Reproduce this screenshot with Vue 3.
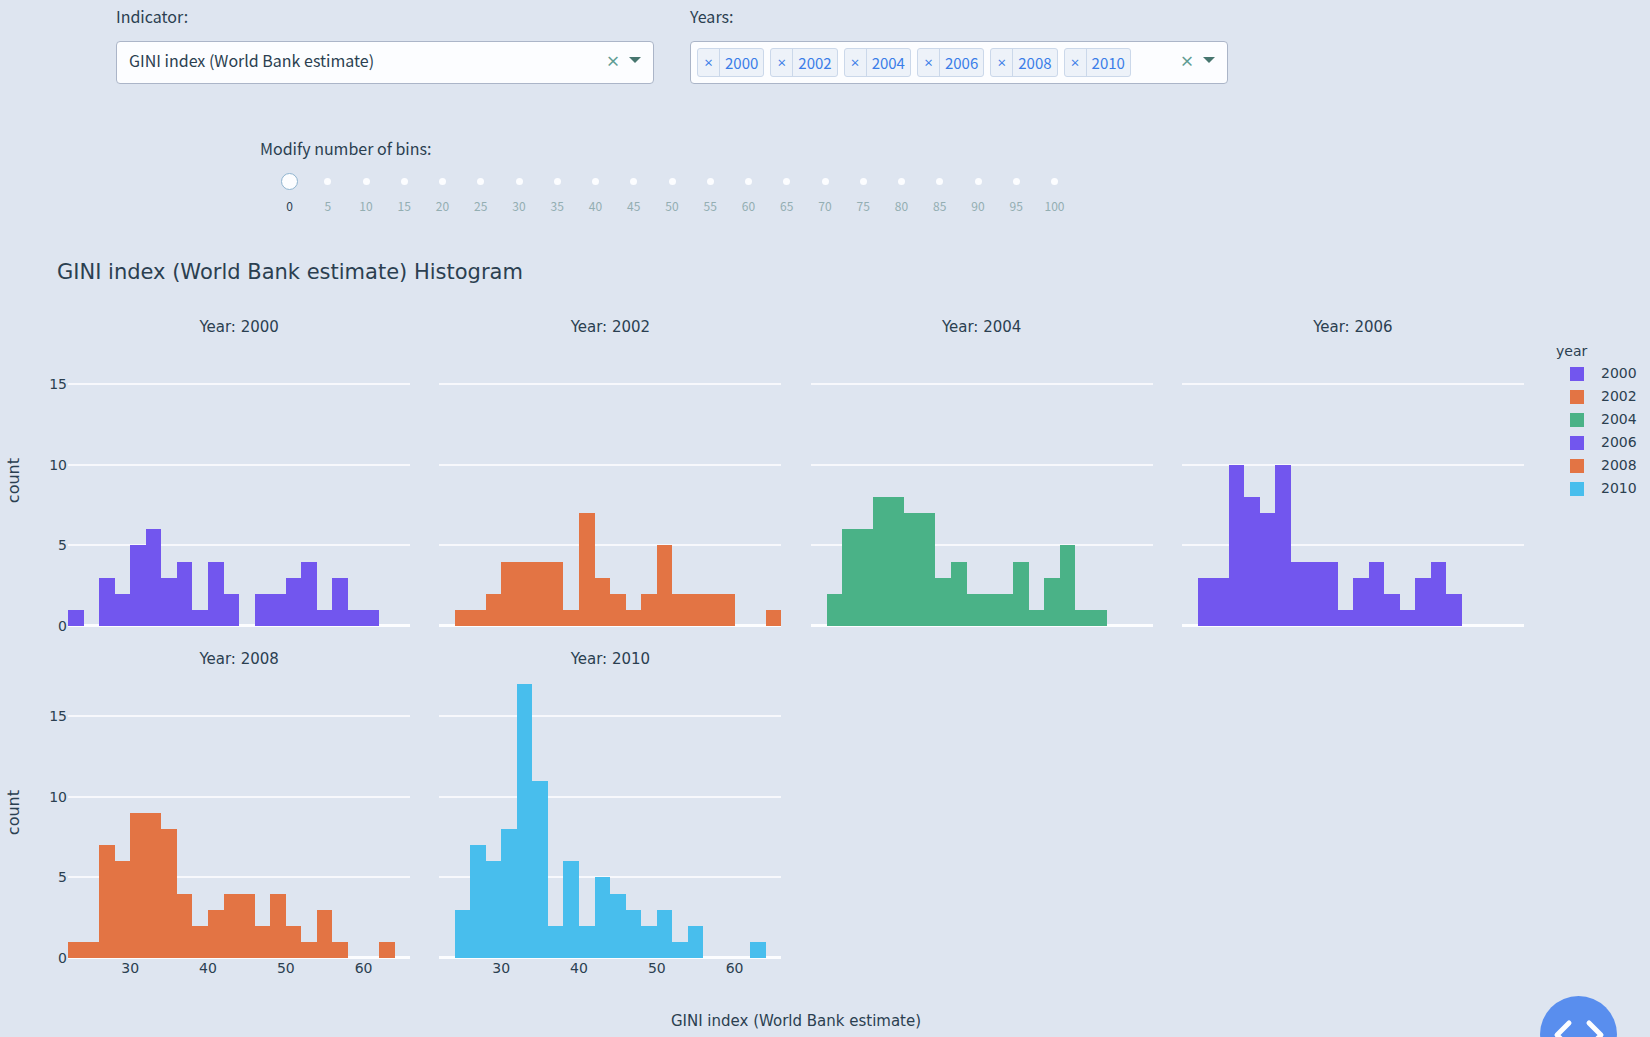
<script setup>
import { computed, ref } from 'vue'

const indicator = ref('GINI index (World Bank estimate)')
const years = ref([2000, 2002, 2004, 2006, 2008, 2010])
const bins = ref(0)
const marks = Array.from({ length: 21 }, (_, i) => i * 5)

const PLOT_HEIGHT = 290
const MAX_COUNT = 18
const X_MIN = 22
const X_MAX = 66
const BIN = 2

const yTicks = [0, 5, 10, 15]
const xTicks = [30, 40, 50, 60]

const series = [
  { year: 2000, color: '#7256ee', counts: [1, 0, 3, 2, 5, 6, 3, 4, 1, 4, 2, 0, 2, 2, 3, 4, 1, 3, 1, 1, 0, 0] },
  { year: 2002, color: '#e37444', counts: [0, 1, 1, 2, 4, 4, 4, 4, 1, 7, 3, 2, 1, 2, 5, 2, 2, 2, 2, 0, 0, 1] },
  { year: 2004, color: '#4ab287', counts: [0, 2, 6, 6, 8, 8, 7, 7, 3, 4, 2, 2, 2, 4, 1, 3, 5, 1, 1, 0, 0, 0] },
  { year: 2006, color: '#7256ee', counts: [0, 3, 3, 10, 8, 7, 10, 4, 4, 4, 1, 3, 4, 2, 1, 3, 4, 2, 0, 0, 0, 0] },
  { year: 2008, color: '#e37444', counts: [1, 1, 7, 6, 9, 9, 8, 4, 2, 3, 4, 4, 2, 4, 2, 1, 3, 1, 0, 0, 1, 0] },
  { year: 2010, color: '#48beed', counts: [0, 3, 7, 6, 8, 17, 11, 2, 6, 2, 5, 4, 3, 2, 3, 1, 2, 0, 0, 0, 1, 0] }
]

const visible = computed(() => series.filter((s) => years.value.includes(s.year)))
const rows = computed(() => {
  const out = []
  for (let i = 0; i < visible.value.length; i += 4) out.push(visible.value.slice(i, i + 4))
  return out
})

const yPos = (count) => Math.round(PLOT_HEIGHT * (1 - count / MAX_COUNT))
const xPos = (value) => `${((value - X_MIN) / (X_MAX - X_MIN)) * 100}%`
const binWidth = `${(BIN / (X_MAX - X_MIN)) * 100}%`

function removeYear(year) {
  years.value = years.value.filter((y) => y !== year)
}
</script>

<template>
  <main class="page">
    <section class="filters">
      <div class="field">
        <label for="indicator">Indicator:</label>
        <div class="control">
          <select id="indicator" v-model="indicator">
            <option>GINI index (World Bank estimate)</option>
          </select>
          <button class="clear" type="button" aria-label="Clear indicator" @click="indicator = ''">×</button>
          <svg class="arrow" viewBox="0 0 12 6" aria-hidden="true"><path d="M0 0h12L6 6z" /></svg>
        </div>
      </div>
      <div class="field">
        <label for="years">Years:</label>
        <div class="control">
          <span v-for="y in years" :key="y" class="tag">
            <button type="button" :aria-label="`Remove ${y}`" @click="removeYear(y)">×</button>
            <span>{{ y }}</span>
          </span>
          <input id="years" class="search" type="text" autocomplete="off" />
          <button class="clear" type="button" aria-label="Clear years" @click="years = []">×</button>
          <svg class="arrow" viewBox="0 0 12 6" aria-hidden="true"><path d="M0 0h12L6 6z" /></svg>
        </div>
      </div>
    </section>

    <section class="bins">
      <label for="bins">Modify number of bins:</label>
      <div class="slider">
        <div class="dots"><span v-for="m in marks" :key="m"><i></i></span></div>
        <input id="bins" v-model.number="bins" type="range" min="0" max="100" step="5" />
      </div>
      <div class="marks">
        <span v-for="m in marks" :key="m" :class="{ active: m <= bins }">{{ m }}</span>
      </div>
    </section>

    <section class="chart">
      <h1>{{ indicator }} Histogram</h1>
      <div class="chart-body">
        <div class="facets">
          <div v-for="(row, r) in rows" :key="r" class="row">
            <div class="axis">
              <span class="axis-title">count</span>
              <svg class="ticks">
                <text v-for="t in yTicks" :key="t" x="100%" :y="yPos(t) + 5" text-anchor="end">{{ t }}</text>
              </svg>
            </div>
            <figure v-for="s in row" :key="s.year" class="facet">
              <figcaption>Year: {{ s.year }}</figcaption>
              <svg class="plot">
                <rect v-for="t in [5, 10, 15]" :key="t" class="grid-line" x="0" :y="yPos(t) - 1" width="100%" height="2" />
                <rect class="zero-line" x="0" :y="PLOT_HEIGHT - 2" width="100%" height="3" />
                <rect
                  v-for="(c, i) in s.counts"
                  :key="i"
                  :x="xPos(X_MIN + i * BIN)"
                  :y="yPos(c)"
                  :width="binWidth"
                  :height="PLOT_HEIGHT - yPos(c)"
                  :fill="s.color"
                />
                <g v-if="r === rows.length - 1">
                  <text v-for="t in xTicks" :key="t" :x="xPos(t)" :y="PLOT_HEIGHT + 15" text-anchor="middle">{{ t }}</text>
                </g>
              </svg>
            </figure>
          </div>
          <p class="x-title">{{ indicator }}</p>
        </div>
        <aside class="legend">
          <h2>year</h2>
          <ul>
            <li v-for="s in visible" :key="s.year">
              <span class="swatch" :style="{ background: s.color }"></span>{{ s.year }}
            </li>
          </ul>
        </aside>
      </div>
    </section>

    <button class="debug" type="button" aria-label="Developer tools">
      <svg viewBox="0 0 77 77" aria-hidden="true">
        <path d="M29 27 17 39l12 12M49 27l12 12-12 12" />
      </svg>
    </button>
  </main>
</template>

<style>
body {
  background: #dee5f0;
}
</style>

<style scoped>
.page {
  min-height: 100vh;
  overflow: hidden;
  box-sizing: border-box;
  background: #dee5f0;
  color: #2b3f50;
  font: 16px/22px "Noto Sans CJK SC", sans-serif;
}
button {
  margin: 0;
  padding: 0;
  border: 0;
  background: none;
  font: inherit;
  color: inherit;
  cursor: pointer;
}
.filters {
  display: grid;
  grid-template-columns: minmax(0, 1fr) minmax(0, 1fr) 271px;
  gap: 36px;
  padding: 5px 115px 0 116px;
}
.field label {
  display: block;
  margin-bottom: 14px;
}
.control {
  display: flex;
  align-items: center;
  box-sizing: border-box;
  height: 43px;
  padding: 0 12px 0 6px;
  border: 1px solid #abb5c8;
  border-radius: 4px;
  background: #fcfdff;
}
select {
  flex: 1;
  min-width: 0;
  height: 100%;
  padding: 0 6px 5px;
  border: 0;
  outline: 0;
  appearance: none;
  background: transparent;
  color: inherit;
  font: inherit;
}
.search {
  flex: 1;
  min-width: 0;
  border: 0;
  outline: 0;
  background: transparent;
  font: inherit;
}
.clear {
  width: 16px;
  margin-right: 8px;
  padding-bottom: 6px;
  color: #5f9c93;
  font-family: "Open Sans", sans-serif;
  font-size: 22px;
}
.arrow {
  width: 12px;
  height: 6px;
  margin-bottom: 5px;
  fill: #47766f;
}
.tag {
  display: flex;
  box-sizing: border-box;
  height: 29px;
  margin-right: 6px;
  border: 1px solid #cbd8ea;
  border-radius: 3px;
  background: #edf2f9;
  color: #3a7de8;
  font-size: 15px;
  line-height: 27px;
}
.tag button {
  width: 22px;
  border-right: 1px solid #cbd8ea;
  font-family: "Open Sans", sans-serif;
}
.tag span {
  padding: 0 5px;
}
.bins {
  width: 782px;
  max-width: 100%;
  padding: 53px 0 0 281px;
}
.bins label {
  display: block;
  margin-left: -21px;
}
.slider {
  display: grid;
  align-items: center;
  height: 17px;
  margin-top: 14px;
}
.slider > * {
  grid-area: 1 / 1;
}
.dots,
.marks {
  display: flex;
  justify-content: space-between;
}
.dots span,
.marks span {
  display: flex;
  justify-content: center;
  width: 17px;
}
.dots i {
  width: 7px;
  height: 7px;
  border-radius: 50%;
  background: #fcfdff;
}
.slider input {
  width: 100%;
  height: 17px;
  margin: 0;
  appearance: none;
  background: transparent;
}
.slider input::-webkit-slider-thumb {
  box-sizing: border-box;
  width: 17px;
  height: 17px;
  border: 1px solid #8fb4cf;
  border-radius: 50%;
  appearance: none;
  background: #fcfdff;
}
.marks {
  margin-top: 7px;
  color: #93aeb2;
  font-size: 12px;
  line-height: 18px;
}
.marks .active {
  color: #2b3f50;
}
.chart {
  margin-top: 44px;
  font: 14px/20px "DejaVu Sans", sans-serif;
}
.chart h1 {
  margin: 0 0 0 57px;
  font-size: 21px;
  font-weight: 400;
  line-height: 26px;
}
.chart-body {
  display: flex;
}
.facets {
  flex: 1;
  min-width: 0;
  padding-top: 31px;
}
.row {
  display: grid;
  grid-template-columns: 39px repeat(4, minmax(0, 1fr));
  column-gap: 29px;
  height: 332px;
}
.axis {
  display: flex;
  align-items: center;
  width: 67px;
  height: 290px;
  padding-top: 20px;
}
.axis-title {
  width: 28px;
  font-size: 16px;
  line-height: 28px;
  writing-mode: vertical-rl;
  transform: rotate(180deg);
}
.ticks {
  width: 39px;
  height: 290px;
  overflow: visible;
}
.facet {
  margin: 0;
}
figcaption {
  height: 20px;
  font-size: 15px;
  line-height: 22px;
  text-align: center;
}
.plot {
  display: block;
  width: 100%;
  height: 290px;
  overflow: visible;
  shape-rendering: crispEdges;
}
text {
  fill: #2b3f50;
}
.grid-line {
  fill: #fcfdff;
  opacity: 0.8;
}
.zero-line {
  fill: #fcfdff;
}
.x-title {
  margin: 31px 0 0 68px;
  font-size: 15px;
  text-align: center;
}
.legend {
  width: 94px;
  padding: 55px 0 0 32px;
}
.legend h2 {
  margin: 0;
  font-size: 14px;
  font-weight: 400;
  line-height: 22px;
}
.legend ul {
  margin: 0;
  padding: 0 0 0 14px;
  list-style: none;
}
.legend li {
  display: flex;
  align-items: center;
  gap: 17px;
  line-height: 23px;
}
.swatch {
  width: 14px;
  height: 14px;
}
.debug {
  position: fixed;
  right: 33px;
  bottom: -36px;
  width: 77px;
  height: 77px;
  border-radius: 50%;
  background: #598eee;
}
.debug svg {
  display: block;
  fill: none;
  stroke: #fcfdff;
  stroke-width: 5;
  stroke-linecap: round;
  stroke-linejoin: round;
}
</style>
